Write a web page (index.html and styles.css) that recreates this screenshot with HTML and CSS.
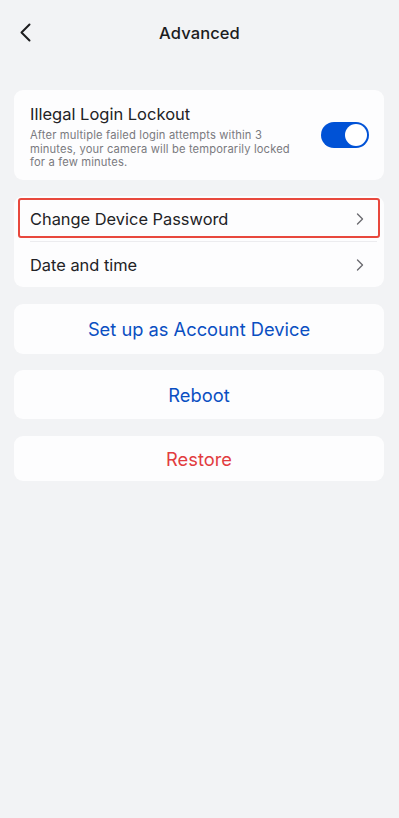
FILE: index.html
```html
<!DOCTYPE html>
<html>
<head>
<meta charset="utf-8">
<link rel="stylesheet" href="styles.css">
</head>
<body>
<div class="page">
  <header class="nav">
    <span class="back">
      <svg width="12" height="19" viewBox="0 0 12 19"><path d="M10.5 1.5 L2.5 9.5 L10.5 17.5" fill="none" stroke="#1c1c1e" stroke-width="2" stroke-linecap="round" stroke-linejoin="round"/></svg>
    </span>
    <h1 class="title">Advanced</h1>
  </header>
  <main class="content">
    <section class="card lockout">
      <div class="lockout-text">
        <div class="lockout-title">Illegal Login Lockout</div>
        <div class="lockout-desc">After multiple failed login attempts within 3 minutes, your camera will be temporarily locked for a few minutes.</div>
      </div>
      <div class="toggle"><span class="knob"></span></div>
    </section>
    <section class="card list">
      <div class="row highlighted">
        <span class="row-label">Change Device Password</span>
        <svg class="chev" width="8" height="12" viewBox="0 0 8 12"><path d="M1.5 1 L6.5 6 L1.5 11" fill="none" stroke="#6b6b70" stroke-width="1.4" stroke-linecap="round" stroke-linejoin="round"/></svg>
      </div>
      <div class="divider"></div>
      <div class="row">
        <span class="row-label">Date and time</span>
        <svg class="chev" width="8" height="12" viewBox="0 0 8 12"><path d="M1.5 1 L6.5 6 L1.5 11" fill="none" stroke="#6b6b70" stroke-width="1.4" stroke-linecap="round" stroke-linejoin="round"/></svg>
      </div>
    </section>
    <button class="card action btn-tall">Set up as Account Device</button>
    <button class="card action btn-mid">Reboot</button>
    <button class="card action danger btn-short">Restore</button>
  </main>
</div>
</body>
</html>
```

FILE: styles.css
```css
* { box-sizing: border-box; }
html, body { margin: 0; padding: 0; }
body {
  background: #f2f3f5;
  font-family: Inter, "Noto Sans", sans-serif;
  color: #1c1c1e;
  width: 399px;
  height: 818px;
}
.page { display: flex; flex-direction: column; }
.nav {
  height: 66px;
  display: flex;
  align-items: center;
  justify-content: center;
  position: relative;
}
.back {
  position: absolute;
  left: 19px;
  top: 23px;
  display: flex;
}
.title {
  margin: 0;
  font-size: 16.5px;
  font-weight: 500;
  letter-spacing: 0.1px;
  color: #1c1c1e;
}
.content {
  display: flex;
  flex-direction: column;
  padding: 24px 15px 0 14px;
}
.card {
  background: #fdfdfe;
  border-radius: 9px;
}
.lockout {
  height: 90px;
  display: flex;
  align-items: flex-start;
  justify-content: space-between;
  padding: 13px 15px 0 16px;
}
.lockout-text { width: 266px; }
.lockout-title {
  font-size: 16.5px;
  line-height: 22px;
  color: #222225;
}
.lockout-desc {
  margin-top: 4px;
  font-size: 11.2px;
  line-height: 13.5px;
  color: #7a7a7f;
  letter-spacing: 0.15px;
}
.toggle {
  margin-top: 19px;
  width: 48px;
  height: 26px;
  border-radius: 13px;
  background: #0052d6;
  display: flex;
  align-items: center;
  justify-content: flex-end;
  padding: 0 2px;
}
.knob {
  width: 22px;
  height: 22px;
  border-radius: 50%;
  background: #fff;
}
.list {
  margin-top: 16px;
  display: flex;
  flex-direction: column;
}
.row {
  position: relative;
  height: 45px;
  display: flex;
  align-items: center;
  justify-content: space-between;
  padding: 0 20px 0 16px;
}
.row-label {
  font-size: 16.4px;
  color: #222225;
}
.highlighted::after {
  content: "";
  position: absolute;
  left: 4px;
  right: 4px;
  top: 2px;
  bottom: 3px;
  border: 2px solid #e8483d;
  border-radius: 3px;
}
.divider {
  height: 1px;
  background: #ececef;
  margin: 0 7px 0 16px;
}
.action {
  border: none;
  margin-top: 16px;
  font-family: inherit;
  font-size: 18.3px;
  color: #0a4fc2;
  text-align: center;
  padding: 0;
}
.btn-tall { height: 50px; margin-top: 17px; }
.btn-mid { height: 49px; }
.btn-short { height: 45px; margin-top: 17px; }
.danger { color: #e23c40; }
```
